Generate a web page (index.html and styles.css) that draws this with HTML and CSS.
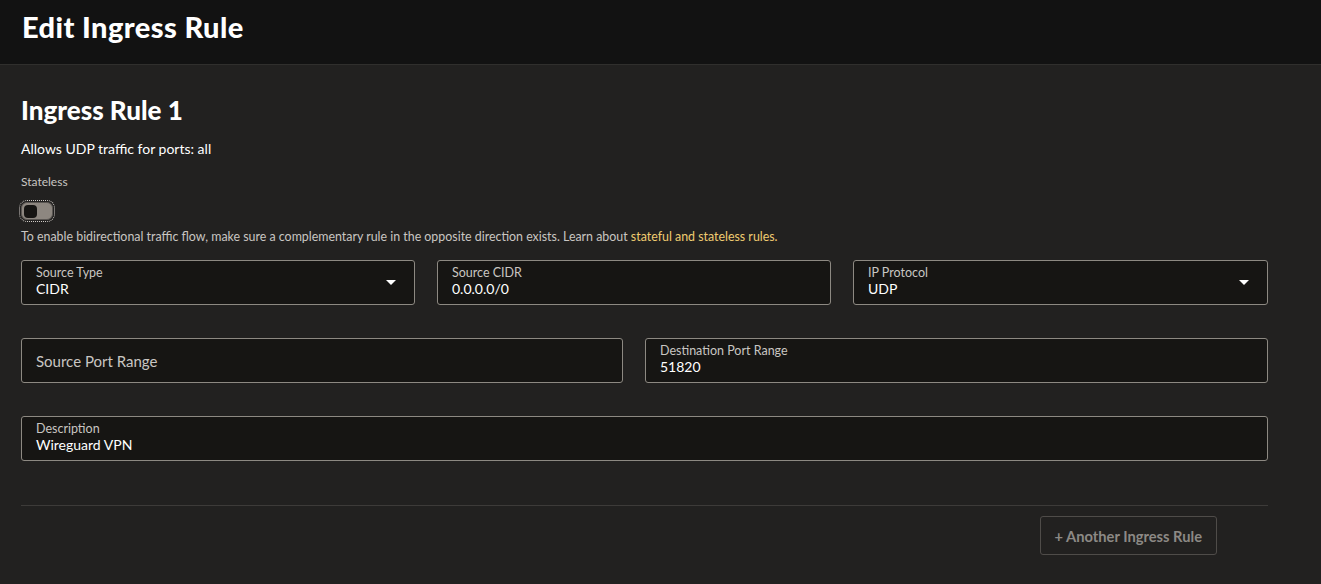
FILE: index.html
```html
<!DOCTYPE html>
<html lang="en">
<head>
    <meta charset="UTF-8">
    <meta name="viewport" content="width=device-width, initial-scale=1.0">
    <title>Edit Ingress Rule</title>
    <link rel="stylesheet" href="styles.css">
</head>
<body>
    <header class="page-header">
        <h1>Edit Ingress Rule</h1>
    </header>

    <main class="rule">
        <h2>Ingress Rule 1</h2>
        <p class="summary">Allows UDP traffic for ports: all</p>

        <div class="stateless">
            <span class="small-label">Stateless</span>
            <div class="toggle-focus"><span class="toggle"><span class="knob"></span></span></div>
            <p class="help">To enable bidirectional traffic flow, make sure a complementary rule in the opposite direction exists. Learn about <a href="#">stateful and stateless rules.</a></p>
        </div>

        <div class="row row-three">
            <div class="field select">
                <span class="label">Source Type</span>
                <span class="value">CIDR</span>
                <span class="caret"></span>
            </div>
            <div class="field">
                <span class="label">Source CIDR</span>
                <span class="value">0.0.0.0/0</span>
            </div>
            <div class="field select">
                <span class="label">IP Protocol</span>
                <span class="value">UDP</span>
                <span class="caret"></span>
            </div>
        </div>

        <div class="row row-two">
            <div class="field empty">
                <span class="placeholder">Source Port Range</span>
            </div>
            <div class="field">
                <span class="label">Destination Port Range</span>
                <span class="value">51820</span>
            </div>
        </div>

        <div class="row">
            <div class="field">
                <span class="label">Description</span>
                <span class="value">Wireguard VPN</span>
            </div>
        </div>

        <div class="actions">
            <button class="add-btn">+ Another Ingress Rule</button>
        </div>
    </main>
</body>
</html>
```

FILE: styles.css
```css
body {
    margin: 0;
    background: #222120;
    color: #fff;
    font-family: Lato, "Open Sans", sans-serif;
}
.page-header {
    background: #121212;
    height: 65px;
    border-bottom: 1px solid #302f2d;
    padding: 0 22px;
    box-sizing: border-box;
}
.page-header h1 {
    margin: 0;
    padding-top: 9px;
    font-size: 29px;
    font-weight: 900;
    letter-spacing: 0.4px;
}
.rule {
    padding: 30px 53px 0 21px;
}
.rule h2 {
    margin: 0;
    font-size: 26px;
    font-weight: 900;
    line-height: 30px;
}
.summary {
    margin: 15px 0 0 0;
    font-size: 14px;
    line-height: 18px;
}
.stateless {
    margin-top: 16px;
}
.small-label {
    display: block;
    font-size: 12px;
    color: #c9c6c2;
    line-height: 16px;
}
.toggle-focus {
    width: fit-content;
    margin: 10px 0 0 -2px;
    padding: 1px;
    border: 1px dotted #cfcac5;
    border-radius: 8px;
}
.toggle {
    display: flex;
    align-items: center;
    width: 32px;
    height: 18px;
    box-sizing: border-box;
    padding: 0 2px;
    background: #8d8780;
    border: 1px solid #5a5652;
    border-radius: 6px;
}
.knob {
    width: 13px;
    height: 13px;
    background: #161513;
    border-radius: 4px;
}
.help {
    margin: 7px 0 0 0;
    font-size: 12.4px;
    color: #c9c6c2;
    line-height: 16px;
}
.help a {
    color: #f0cc71;
    text-decoration: none;
}
.row {
    display: grid;
    gap: 22px;
    margin-bottom: 33px;
}
.row-three {
    margin-top: 15px;
    grid-template-columns: 394px 394px 1fr;
}
.row-two {
    grid-template-columns: 602px 1fr;
}
.field {
    position: relative;
    height: 45px;
    box-sizing: border-box;
    background: #161513;
    border: 1px solid #8d8982;
    border-radius: 3px;
    padding: 5px 14px 0 14px;
}
.label {
    display: block;
    font-size: 12.5px;
    color: #c9c6c2;
    line-height: 14px;
}
.value {
    display: block;
    font-size: 14px;
    color: #fff;
    line-height: 18px;
}
.placeholder {
    display: block;
    font-size: 15px;
    color: #c9c6c2;
    line-height: 36px;
}
.empty {
    padding-top: 4px;
}
.caret {
    position: absolute;
    right: 18px;
    top: 19px;
    border-left: 5px solid transparent;
    border-right: 5px solid transparent;
    border-top: 5px solid #fff;
}
.actions {
    border-top: 1px solid #3d3b39;
    margin-top: 44px;
    padding: 10px 51px 0 0;
    display: flex;
    justify-content: flex-end;
}
.add-btn {
    height: 39px;
    padding: 0 14px;
    background: transparent;
    border: 1px solid #4f4c49;
    border-radius: 3px;
    color: #8c8985;
    font-family: inherit;
    font-size: 14.7px;
    font-weight: bold;
}
```
